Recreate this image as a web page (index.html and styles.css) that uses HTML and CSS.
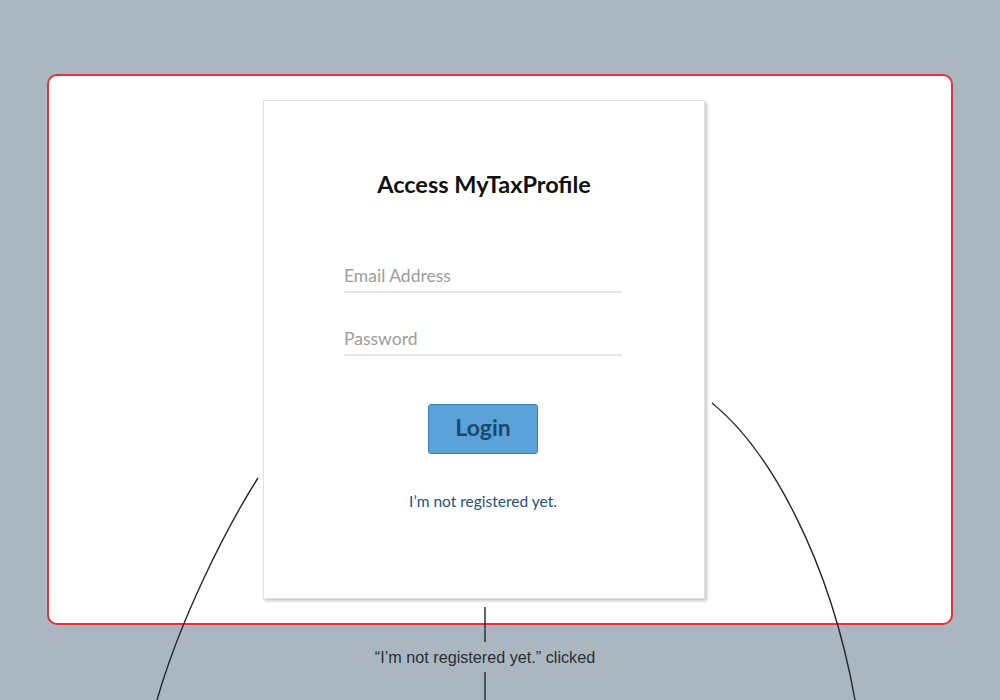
FILE: index.html
```html
<!DOCTYPE html>
<html>
<head>
<meta charset="utf-8">
<link rel="stylesheet" href="styles.css">
</head>
<body>
<div class="page">
  <div class="frame">
    <div class="card">
      <h1 class="title">Access MyTaxProfile</h1>
      <div class="fields">
        <input class="field" type="text" placeholder="Email Address">
        <input class="field" type="password" placeholder="Password">
      </div>
      <button class="login">Login</button>
      <a class="register" href="#">I’m not registered yet.</a>
    </div>
  </div>
  <div class="caption">“I’m not registered yet.” clicked</div>
  <svg class="links" width="1000" height="700" viewBox="0 0 1000 700">
    <path d="M258 478 C 225 530 180 620 157 700" />
    <path d="M712 403 C 770 450 830 560 855 700" />
    <path d="M485 607 L485 642" />
    <path d="M485 672 L485 700" />
  </svg>
</div>
</body>
</html>
```

FILE: styles.css
```css
html, body {
  margin: 0;
  padding: 0;
}
body {
  background: #aab7c0;
  width: 1000px;
  height: 700px;
  overflow: hidden;
}
.page {
  position: relative;
  width: 1000px;
  height: 700px;
  padding-top: 74px;
  box-sizing: border-box;
}
.frame {
  margin-left: 47px;
  width: 906px;
  height: 551px;
  box-sizing: border-box;
  border: 2px solid #e8303a;
  border-radius: 10px;
  background: #ffffff;
  padding-top: 24px;
  padding-left: 214px;
}
.card {
  width: 442px;
  height: 499px;
  box-sizing: border-box;
  border: 1px solid #e2e2e2;
  background: #ffffff;
  box-shadow: 2px 2px 3px rgba(0, 0, 0, 0.22);
  display: flex;
  flex-direction: column;
  align-items: center;
  font-family: Lato, "Open Sans", sans-serif;
}
.title {
  margin: 69px 0 0 0;
  font-size: 23.5px;
  font-weight: 700;
  line-height: 28px;
  color: #111111;
}
.fields {
  margin-top: 58px;
  width: 278px;
  display: flex;
  flex-direction: column;
  gap: 26px;
  margin-left: -2px;
}
.field {
  border: none;
  border-bottom: 2px solid #e6e6e6;
  outline: none;
  padding: 3px 0 0 0;
  margin: 0;
  height: 37px;
  box-sizing: border-box;
  font-family: Lato, "Open Sans", sans-serif;
  font-size: 17.5px;
  color: #333;
  background: transparent;
}
.field::placeholder {
  color: #9c9c9c;
}
.login {
  margin-top: 48px;
  margin-left: -2px;
  width: 110px;
  height: 50px;
  border: 1px solid #3a80b7;
  border-radius: 3px;
  background: #5aa2d7;
  color: #1b496e;
  font-family: Lato, "Open Sans", sans-serif;
  font-size: 23px;
  font-weight: 700;
  padding: 0 0 4px 0;
}
.register {
  margin-top: 37px;
  margin-left: -2px;
  font-size: 15.5px;
  line-height: 20px;
  color: #23527e;
  text-decoration: none;
}
.caption {
  margin-top: 23px;
  width: 970px;
  text-align: center;
  font-family: "Liberation Sans", Arial, sans-serif;
  font-size: 16.2px;
  line-height: 18px;
  color: #2a2f34;
}
.links {
  position: absolute;
  left: 0;
  top: 0;
  pointer-events: none;
}
.links path {
  fill: none;
  stroke: #23272b;
  stroke-width: 1.4;
}
```
